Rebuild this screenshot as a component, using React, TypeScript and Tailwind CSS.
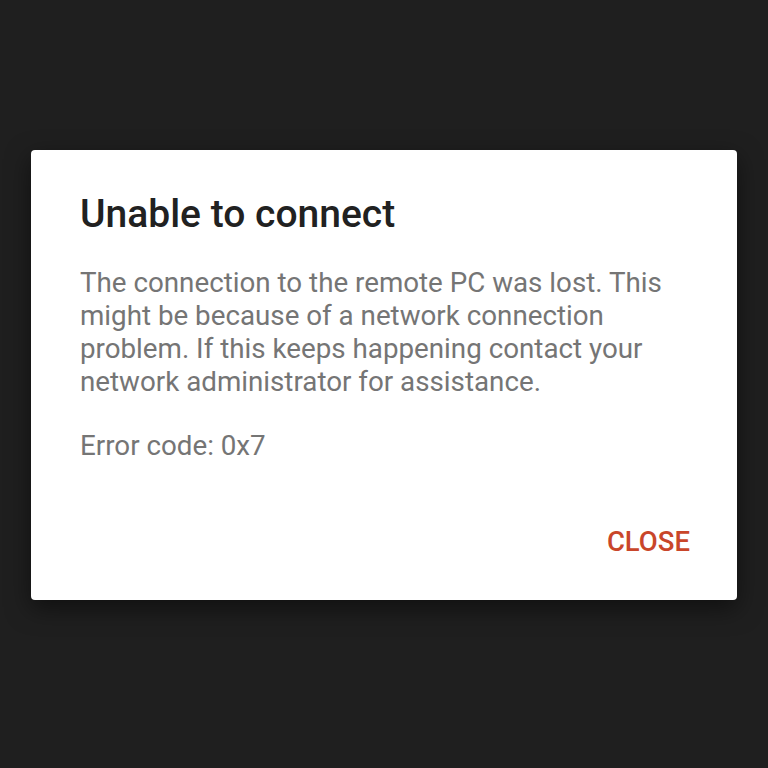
export default function App() {
  return (
    <div
      className="flex h-[768px] w-[768px] justify-center bg-[#1f1f1f] pt-[150px]"
      style={{ fontFamily: 'Roboto, "Noto Sans", sans-serif' }}
    >
      <div className="flex h-[450px] w-[706px] flex-col rounded-[4px] bg-white pl-[49px] pr-[47px] pt-[41px] shadow-[0_8px_24px_rgba(0,0,0,0.5)]">
        <h1 className="text-[39px] font-medium leading-[46px] text-[#212121]">Unable to connect</h1>
        <p className="mt-[29px] text-[27.75px] leading-[33px] text-[#757575]">
          The connection to the remote PC was lost. This might be because of a network connection
          problem. If this keeps happening contact your network administrator for assistance.
        </p>
        <p className="mt-[31px] text-[27.75px] leading-[33px] text-[#757575]">Error code: 0x7</p>
        <div className="mt-auto mb-[38px] flex justify-end">
          <button className="text-[27.5px] font-medium leading-[40px] text-[#c9462a]">CLOSE</button>
        </div>
      </div>
    </div>
  );
}
